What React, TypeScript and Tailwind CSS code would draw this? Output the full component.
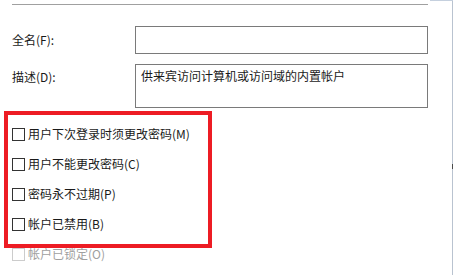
import React from 'react';

const font = { fontFamily: '"Noto Sans CJK SC", "Liberation Sans", sans-serif' };

const options = [
  { label: '用户下次登录时须更改密码(M)', disabled: false },
  { label: '用户不能更改密码(C)', disabled: false },
  { label: '密码永不过期(P)', disabled: false },
  { label: '帐户已禁用(B)', disabled: false },
];

function CheckRow({ label, disabled }: { label: string; disabled?: boolean }) {
  return (
    <div className="flex items-center gap-[3px] h-[30px] pl-[4px]">
      <span
        className={
          disabled
            ? 'w-[13px] h-[13px] border border-[#cccccc] bg-white shrink-0'
            : 'w-[13px] h-[13px] border border-[#333333] bg-white shrink-0'
        }
      />
      <span className={disabled ? 'text-[12px] text-[#a0a0a0]' : 'text-[12px] text-[#1a1a1a]'}>{label}</span>
    </div>
  );
}

export default function App() {
  return (
    <div className="relative w-[453px] h-[275px] bg-white overflow-hidden flex" style={font}>
      <div className="flex-1 flex flex-col">
        {/* separator */}
        <div className="mt-[4px] ml-[12px] w-[416px] h-px bg-[#a0a0a0]" />

        {/* full name */}
        <div className="flex mt-[21px]">
          <div className="w-[135px] pl-[12px] h-[28px] flex items-center text-[12px] text-[#1a1a1a]">全名(F):</div>
          <div className="w-[293px] h-[28px] border border-[#7a7a7a] bg-white" />
        </div>

        {/* description */}
        <div className="flex mt-[10px]">
          <div className="w-[135px] pl-[12px] pt-[5px] text-[12px] leading-[16px] text-[#1a1a1a]">描述(D):</div>
          <div className="w-[293px] h-[44px] border border-[#7a7a7a] bg-white px-[5px] pt-[3px] text-[12px] leading-[16px] text-[#1a1a1a]">
            供来宾访问计算机或访问域的内置帐户
          </div>
        </div>

        {/* highlighted options */}
        <div className="mt-[3px] ml-[4px] w-[208px] h-[137px] border-[4px] border-[#ed1c24] pt-[4px]">
          {options.map((o) => (
            <CheckRow key={o.label} label={o.label} disabled={o.disabled} />
          ))}
        </div>

        <div className="flex items-center gap-[3px] h-[12px] pl-[12px]">
          <span className="w-[13px] h-[13px] border border-[#cccccc] bg-white shrink-0" />
          <span className="text-[12px] text-[#a0a0a0]">帐户已锁定(O)</span>
        </div>
      </div>

      {/* window edge */}
      <div className="w-px h-full bg-[#b9c3d0] flex flex-col">
        <div className="h-[164px]" />
        <div className="h-[5px] bg-[#4a4a4a]" />
      </div>
      <div className="absolute top-0 right-0 w-[23px] h-px bg-[#c5d0de]" />
    </div>
  );
}
